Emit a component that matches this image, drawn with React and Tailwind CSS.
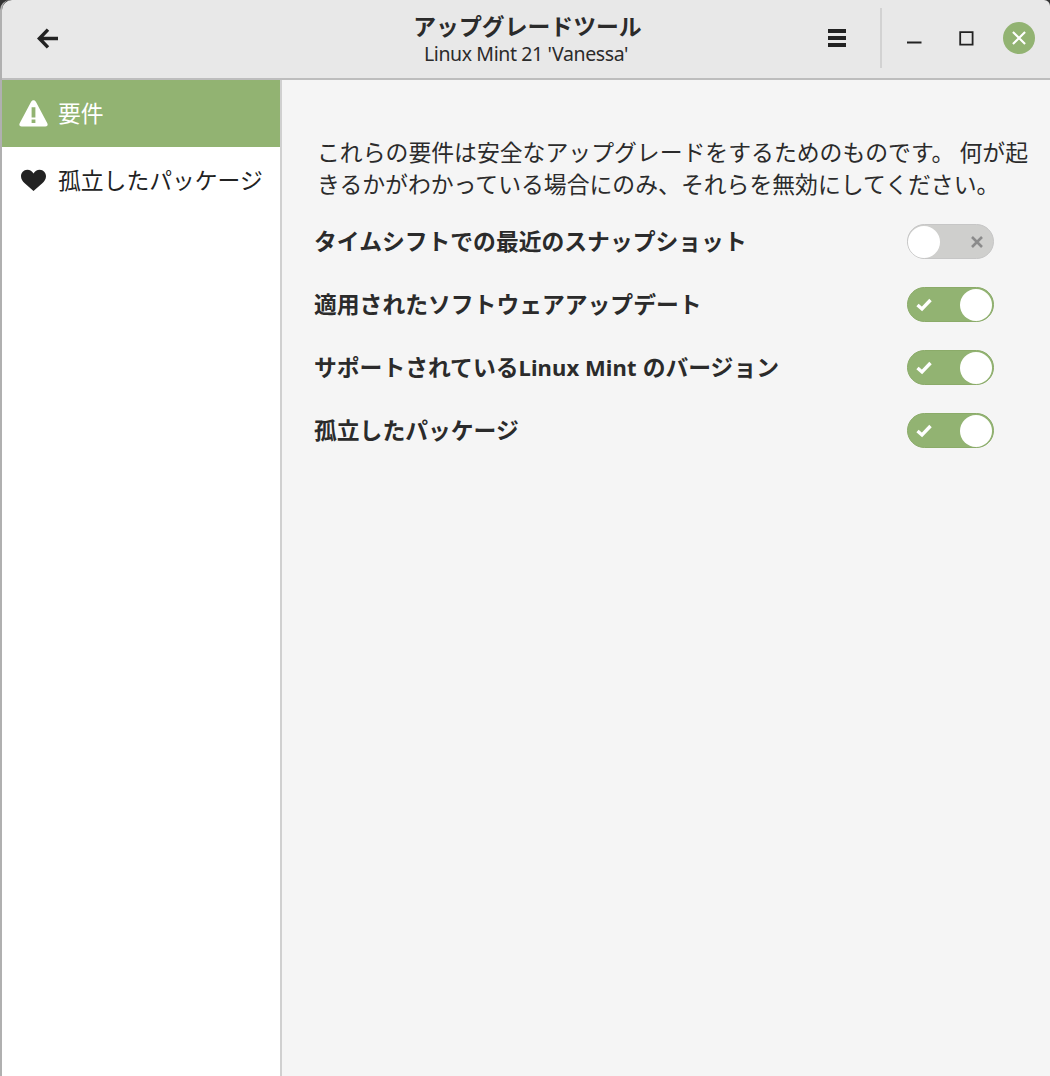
import { useState } from 'react';

const pages = [
  { id: 'requirements', label: '要件', Icon: WarningIcon },
  { id: 'orphans', label: '孤立したパッケージ', Icon: HeartIcon },
];

const requirements = [
  { id: 'timeshift', label: 'タイムシフトでの最近のスナップショット', enabled: false },
  { id: 'updates', label: '適用されたソフトウェアアップデート', enabled: true },
  {
    id: 'version',
    label: (
      <>
        サポートされている
        <span className="inline-block w-[119px] whitespace-nowrap font-['Noto_Sans'] text-[22px] leading-none tracking-[0.1px]">
          Linux Mint
        </span>{' '}
        のバージョン
      </>
    ),
    enabled: true,
  },
  { id: 'orphans', label: '孤立したパッケージ', enabled: true },
];

function WarningIcon() {
  return (
    <svg className="h-[27px] w-[29px] shrink-0" viewBox="0 0 29 27" fill="currentColor">
      <path
        fillRule="evenodd"
        d="M14.5 0.3c1 0 1.9.6 2.5 1.7l11.3 21.2c.9 1.8 0 3.3-1.9 3.3H2.6C.7 26.500-.2 25 .7 23.200L12 2c.6-1.100 1.500-1.700 2.500-1.700ZM12.600 7.200v10.300h3.800V7.200ZM12.600 19.500v3.600h3.800v-3.600Z"
      />
    </svg>
  );
}

function HeartIcon() {
  return (
    <svg className="h-[27px] w-[29px] shrink-0" viewBox="0 0 29 27" fill="currentColor">
      <path d="M8.300 2.800c2.700 0 4.900 1.500 6.200 3.600 1.300-2.100 3.500-3.600 6.200-3.600 3.700 0 6.300 3 6.300 6.500 0 3-1.500 4.900-3.700 7L14.500 24 5.700 16.300C3.500 14.200 2 12.300 2 9.300c0-3.500 2.600-6.500 6.300-6.500Z" />
    </svg>
  );
}

function Switch({ on, onClick }) {
  return (
    <button
      type="button"
      role="switch"
      aria-checked={on}
      onClick={onClick}
      className={`flex h-[35px] w-[87px] items-center justify-between rounded-full border ${
        on
          ? 'border-[#8bab69] bg-[#92b372] pr-px pl-2'
          : 'border-[#c6c6c6] bg-[#cfcfcd] pr-2.5'
      }`}
    >
      {on ? (
        <>
          <svg className="h-3.5 w-4" viewBox="0 0 16 14" fill="none" stroke="#fff" strokeWidth="3.4">
            <path d="M1.500 7 6 11 14.500 2" />
          </svg>
          <span className="size-8 rounded-full bg-white" />
        </>
      ) : (
        <>
          <span className="size-8 rounded-full bg-white" />
          <svg className="size-3" viewBox="0 0 12 12" fill="none" stroke="#8b8b8b" strokeWidth="2.600">
            <path d="M1 1l10 10M11 1 1 11" />
          </svg>
        </>
      )}
    </button>
  );
}

function HeaderBar() {
  return (
    <header className="flex h-20 shrink-0 justify-between rounded-tl-[10px] rounded-tr-[6px] border-b-2 border-[#bdbdbd] bg-[#e8e8e8]">
      <div className="flex w-[170px] items-center pb-0.5 pl-[35px]">
        <svg className="h-[21px] w-[21px]" viewBox="0 0 22 21" fill="none" stroke="#222" strokeWidth="3.600">
          <path d="M11.500 1.200 2.500 10.500l9 9.300M2.500 10.500H22" />
        </svg>
      </div>
      <div className="flex flex-col items-center pt-[13px] pl-[55px]">
        <h1 className="text-[22.85px] leading-[25px] font-bold">アップグレードツール</h1>
        <p className="mr-[3px] pt-[3px] font-['Noto_Sans'] text-[19.5px] leading-[26px] tracking-[-0.38px]">
          Linux Mint 21 &apos;Vanessa&apos;
        </p>
      </div>
      <div className="flex items-center pb-0.5">
        <svg className="h-5 w-[18px]" viewBox="0 0 18 20" fill="#222">
          <path d="M0 1h18v4H0zM0 8h18v4H0zM0 15h18v4H0z" />
        </svg>
        <span className="ml-[34px] h-[60px] w-0.5 bg-[#d2d2d2]" />
        <svg className="ml-[25px] size-[15px]" viewBox="0 0 15 15" fill="#222">
          <path d="M0 10.500h14.500v2H0z" />
        </svg>
        <svg className="ml-[37px] size-[15px]" viewBox="0 0 15 15" fill="none" stroke="#222" strokeWidth="1.800">
          <path d="M1.200 1.200h12.400v12.400H1.200z" />
        </svg>
        <span className="mr-[15px] ml-[29px] flex size-8 items-center justify-center rounded-full bg-[#92b372]">
          <svg className="size-3.5" viewBox="0 0 15 15" fill="none" stroke="#fff" strokeWidth="2.300">
            <path d="M1 1l13 13M14 1 1 14" />
          </svg>
        </span>
      </div>
    </header>
  );
}

export default function App() {
  const [page, setPage] = useState('requirements');
  const [checks, setChecks] = useState(() =>
    Object.fromEntries(requirements.map((r) => [r.id, r.enabled])),
  );

  return (
    <div className="h-[1076px] w-[1050px] overflow-hidden bg-[#333] font-['Noto_Sans_CJK_JP',sans-serif] text-[22.8px] text-[#2b2b2b]">
      <div className="flex h-full flex-col rounded-tl-[10px] rounded-tr-[6px] border-l-2 border-[#b0b0b0]">
        <HeaderBar />
        <div className="flex min-h-0 grow">
          <nav className="w-[280px] shrink-0 border-r-2 border-[#d0d0d0] bg-white">
            {pages.map(({ id, label, Icon }) => (
              <button
                key={id}
                type="button"
                onClick={() => setPage(id)}
                className={`flex h-[67px] w-full items-center gap-2.5 pl-[17px] ${
                  page === id ? 'bg-[#92b372] text-white' : 'text-[#222]'
                }`}
              >
                <Icon />
                <span className="whitespace-nowrap">{label}</span>
              </button>
            ))}
          </nav>
          <main className="grow bg-[#f5f5f5] pt-[55px] pl-8">
            <p className="pl-[3px] text-[22.85px] leading-8 whitespace-nowrap">
              これらの要件は安全なアップグレードをするためのものです。 何が起
              <br />
              きるかがわかっている場合にのみ、それらを無効にしてください。
            </p>
            <ul className="mt-[11px] pr-14">
              {requirements.map(({ id, label }) => (
                <li key={id} className="flex h-[63px] items-center justify-between">
                  <span className="font-bold whitespace-nowrap">{label}</span>
                  <Switch
                    on={checks[id]}
                    onClick={() => setChecks({ ...checks, [id]: !checks[id] })}
                  />
                </li>
              ))}
            </ul>
          </main>
        </div>
      </div>
    </div>
  );
}
